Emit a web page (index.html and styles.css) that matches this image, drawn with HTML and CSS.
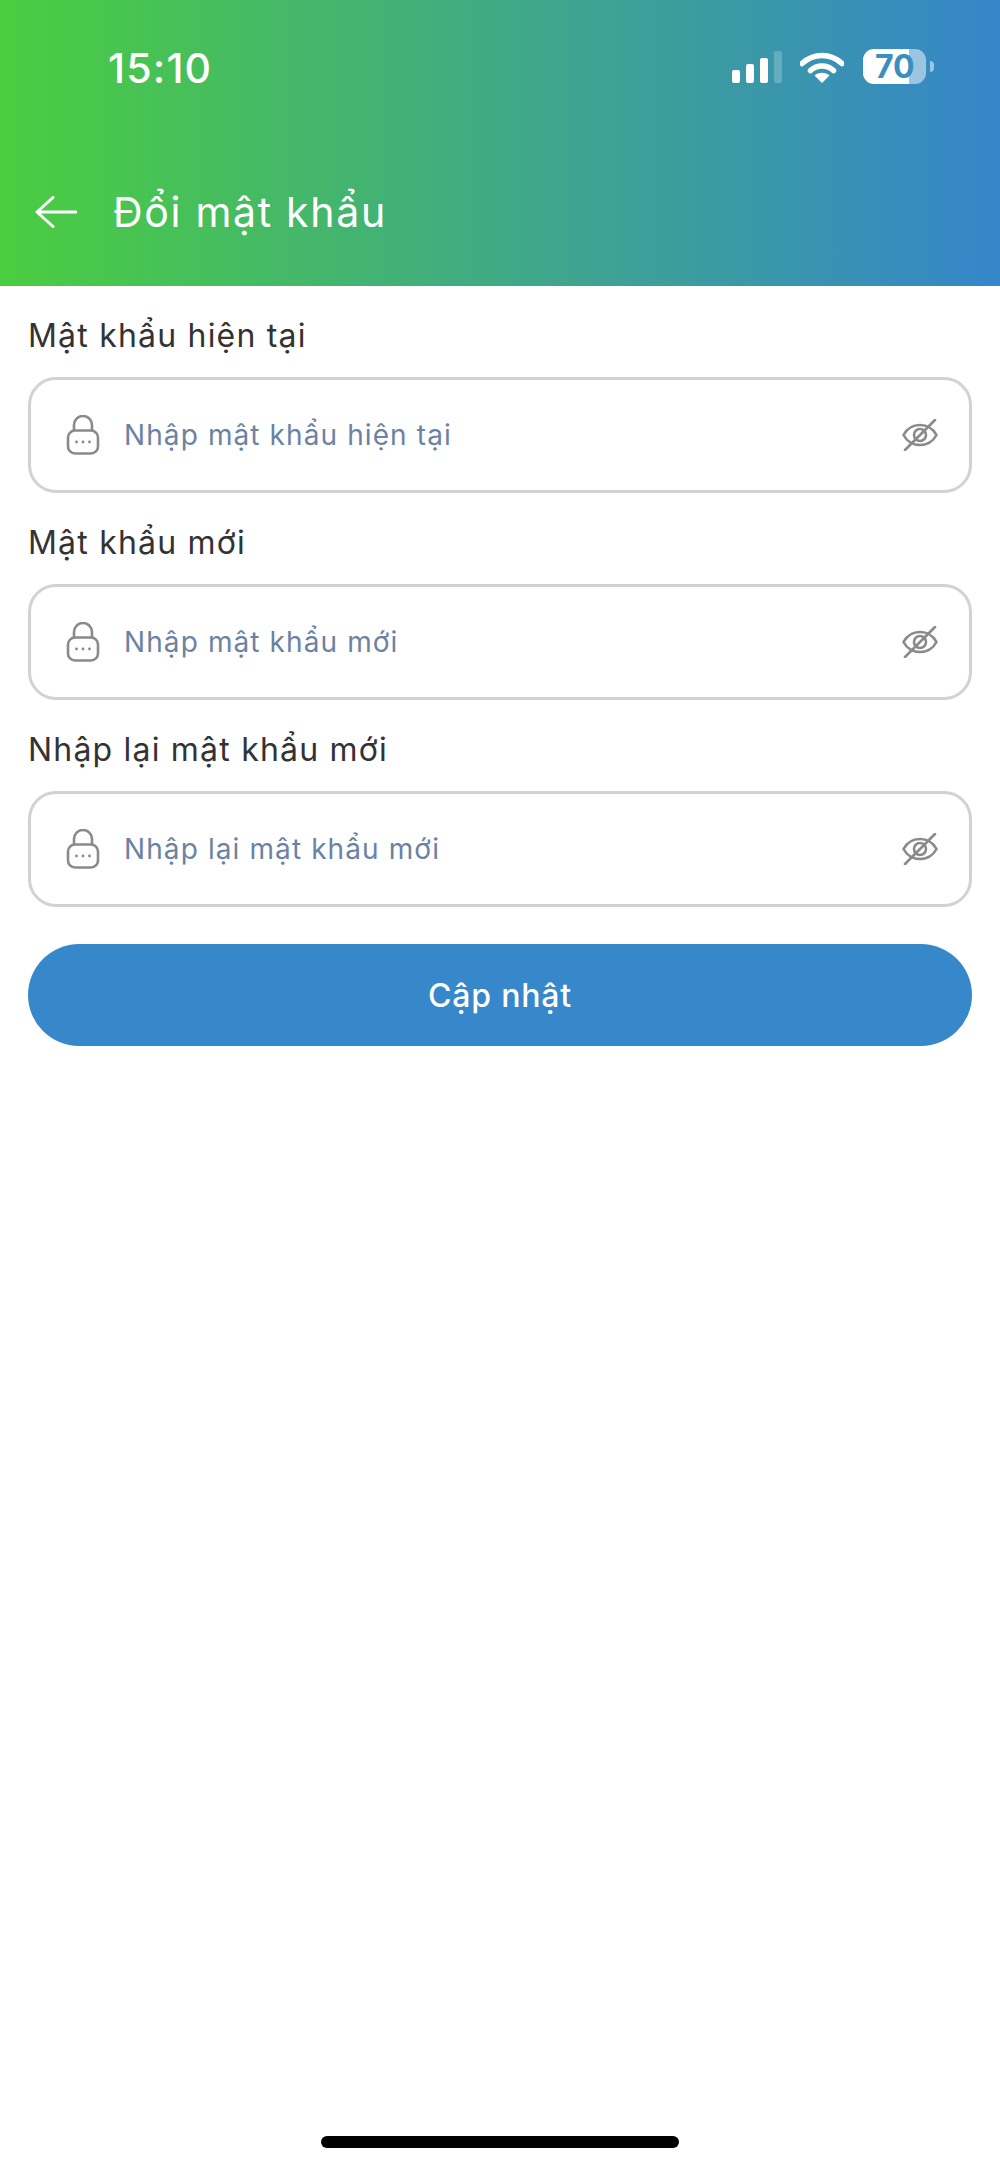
FILE: index.html
```html
<!DOCTYPE html>
<html lang="vi">
  <head>
    <meta charset="UTF-8" />
    <meta name="viewport" content="width=device-width, initial-scale=1.0" />
    <title>Đổi mật khẩu</title>
    <link rel="stylesheet" href="styles.css">
  </head>

  <body>
    <svg class="icon-defs" width="0" height="0">
      <symbol id="lock" viewBox="0 0 34 40">
        <path d="M8 16V10a9 9 0 0 1 18 0v6" fill="none" stroke="#8a8a8a" stroke-width="2.6" />
        <rect x="2" y="15.5" width="30" height="23" rx="7" fill="none" stroke="#8a8a8a" stroke-width="2.6" />
        <circle cx="10.5" cy="27" r="1.4" fill="#8a8a8a" />
        <circle cx="17" cy="27" r="1.4" fill="#8a8a8a" />
        <circle cx="23.5" cy="27" r="1.4" fill="#8a8a8a" />
      </symbol>
      <symbol id="eye-off" viewBox="0 0 36 32">
        <path d="M1.5 16C5 9.500 11 6 18 6s13 3.500 16.500 10C31 22.500 25 26 18 26S5 22.500 1.500 16Z" fill="none" stroke="#8a8a8a" stroke-width="2.600" />
        <circle cx="18" cy="16" r="6" fill="none" stroke="#8a8a8a" stroke-width="2.600" />
        <path d="M33 1 3 31" fill="none" stroke="#8a8a8a" stroke-width="2.600" stroke-linecap="round" />
      </symbol>
    </svg>

    <!-- Header with status bar -->
    <header class="header">
      <div class="status-bar">
        <span class="time">15:10</span>
        <div class="status-icons">
          <div class="signal">
            <span class="bar bar-1"></span>
            <span class="bar bar-2"></span>
            <span class="bar bar-3"></span>
            <span class="bar bar-4"></span>
          </div>
          <svg class="wifi" width="44" height="31" viewBox="0 0 44 31">
            <path d="M2 11.500C7.500 6.500 14.500 3.500 22 3.500s14.500 3 20 8" fill="none" stroke="#fff" stroke-width="5.500" stroke-linecap="round" />
            <path d="M10.500 18.500c3-2.800 7-4.500 11.500-4.500s8.500 1.700 11.500 4.500" fill="none" stroke="#fff" stroke-width="5.500" stroke-linecap="round" />
            <path d="M22 31 14.500 23.500c2-1.700 4.600-2.700 7.500-2.700s5.500 1 7.500 2.700Z" fill="#fff" />
          </svg>
          <div class="battery">
            <div class="battery-body">70</div>
            <span class="battery-nub"></span>
          </div>
        </div>
      </div>
      <div class="app-bar">
        <svg class="back" width="42" height="32" viewBox="0 0 42 32">
          <path d="M18 1.500 2 16l16 14.500M2 16h39" fill="none" stroke="#fff" stroke-width="3" stroke-linecap="round" stroke-linejoin="round" />
        </svg>
        <h1>Đổi mật khẩu</h1>
      </div>
    </header>

    <!-- Password form -->
    <main class="form">
      <label class="field-label">Mật khẩu hiện tại</label>
      <div class="field">
        <svg class="lock" width="34" height="40"><use href="#lock" /></svg>
        <span class="placeholder">Nhập mật khẩu hiện tại</span>
        <svg class="eye" width="36" height="32"><use href="#eye-off" /></svg>
      </div>

      <label class="field-label">Mật khẩu mới</label>
      <div class="field">
        <svg class="lock" width="34" height="40"><use href="#lock" /></svg>
        <span class="placeholder">Nhập mật khẩu mới</span>
        <svg class="eye" width="36" height="32"><use href="#eye-off" /></svg>
      </div>

      <label class="field-label">Nhập lại mật khẩu mới</label>
      <div class="field">
        <svg class="lock" width="34" height="40"><use href="#lock" /></svg>
        <span class="placeholder">Nhập lại mật khẩu mới</span>
        <svg class="eye" width="36" height="32"><use href="#eye-off" /></svg>
      </div>

      <button class="submit">Cập nhật</button>
    </main>

    <div class="home-bar"></div>
  </body>
</html>
```

FILE: styles.css
```css
/* Page */
body {
  margin: 0;
  width: 1000px;
  height: 2167px;
  display: flex;
  flex-direction: column;
  overflow: hidden;
  background-color: #fff;
  font-family: Inter, "Noto Sans", sans-serif;
}

.icon-defs {
  position: absolute;
}

/* Header */
.header {
  height: 286px;
  flex-shrink: 0;
  background: linear-gradient(90deg, #4bcd40 0%, #3586ca 100%);
  color: #fff;
}

.status-bar {
  height: 191px;
  padding: 0 66px 0 108px;
  box-sizing: border-box;
  display: flex;
  justify-content: space-between;
  align-items: flex-start;
}

.time {
  margin-top: 44px;
  font-size: 41px;
  line-height: 48px;
  font-weight: 500;
  letter-spacing: 1.2px;
}

.status-icons {
  margin-top: 49px;
  display: flex;
  align-items: flex-start;
}

.signal {
  width: 50px;
  height: 34px;
  display: flex;
  align-items: flex-end;
  justify-content: space-between;
}

.bar {
  width: 8px;
  background-color: #fff;
  border-radius: 2px;
}

.bar-1 { height: 13px; }
.bar-2 { height: 19px; }
.bar-3 { height: 25px; }
.bar-4 { height: 32px; background-color: rgba(255, 255, 255, 0.22); }

.wifi {
  margin: 3px 0 0 18px;
}

.battery {
  margin-left: 19px;
  display: flex;
  align-items: center;
}

.battery-body {
  width: 63px;
  height: 35px;
  border-radius: 11px;
  background: linear-gradient(90deg, #fff 46px, rgba(255, 255, 255, 0.5) 46px);
  color: #3a8fc0;
  font-size: 32px;
  line-height: 35px;
  font-weight: 700;
  padding-left: 12px;
  box-sizing: border-box;
}

.battery-nub {
  width: 4px;
  height: 11px;
  margin-left: 4px;
  border-radius: 0 4px 4px 0;
  background-color: rgba(255, 255, 255, 0.5);
}

.app-bar {
  display: flex;
  align-items: center;
  padding-left: 35px;
  height: 42px;
}

.back {
  flex-shrink: 0;
}

h1 {
  margin: 0 0 0 36px;
  font-size: 41px;
  line-height: 42px;
  font-weight: 400;
  letter-spacing: 1.7px;
}

/* Form */
.form {
  padding: 0 28px;
  display: flex;
  flex-direction: column;
}

.field-label {
  height: 91px;
  padding-top: 30px;
  box-sizing: border-box;
  font-size: 32px;
  line-height: 40px;
  color: #333;
  letter-spacing: 1.2px;
}

.field {
  height: 116px;
  box-sizing: border-box;
  border: 3px solid #d2d2d2;
  border-radius: 28px;
  display: flex;
  align-items: center;
  padding: 0 31px 0 35px;
}

.placeholder {
  margin-left: 24px;
  flex: 1;
  font-size: 28px;
  color: #6c82a3;
  letter-spacing: 1.1px;
}

/* Button */
.submit {
  margin-top: 37px;
  height: 102px;
  border: none;
  border-radius: 51px;
  background-color: #3688ca;
  color: #fff;
  font-family: inherit;
  font-size: 32px;
  font-weight: 500;
  letter-spacing: 0.8px;
}

/* Home indicator */
.home-bar {
  width: 358px;
  height: 12px;
  margin: auto auto 19px;
  border-radius: 6px;
  background-color: #000;
}
```
